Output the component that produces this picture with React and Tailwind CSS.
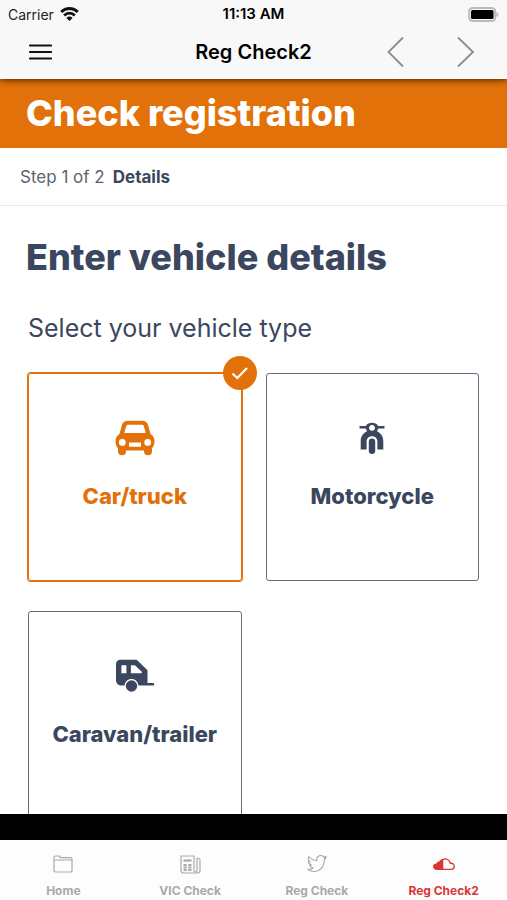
import React, { useState } from 'react';

const WifiIcon = () => (
  <svg width="19" height="14" viewBox="0 0 19 14" fill="none" stroke="#111" strokeWidth="2.8" aria-hidden="true">
    <path d="M1.2 4.9a11.8 11.8 0 0 1 16.6 0" />
    <path d="M4.2 8.4a7.5 7.5 0 0 1 10.6 0" />
    <path d="M9.500 14 6.400 10.900a4.400 4.400 0 0 1 6.200 0z" fill="#111" stroke="none" />
  </svg>
);

const BatteryIcon = () => (
  <svg width="31" height="15" viewBox="0 0 31 15" aria-hidden="true">
    <rect x="1.200" y="1" width="26" height="13" rx="3.5" fill="#f7f7f7" stroke="#bbb" strokeWidth="2" />
    <rect x="3" y="3" width="22.500" height="9" rx="1.5" fill="#000" />
    <path d="M28.400 5v5c1.300-.4 2-1.300 2-2.500s-.7-2.100-2-2.500z" fill="#bbb" />
  </svg>
);

const CarIcon = () => (
  <svg width="40" height="36" viewBox="0 0 40 36" aria-hidden="true">
    <path
      fill="currentColor"
      fillRule="evenodd"
      d="M13 .8h14c3.300 0 5.300 1.500 6.200 4.700l2.300 8.500c2.600 1.500 4 4.200 4 7.300 0 3-1 5.500-2.500 7v2.900a4 4 0 0 1-8 0v-.7H11v.7a4 4 0 0 1-8 0v-2.900C1.500 26.800.5 24.300.5 21.300c0-3.100 1.400-5.800 4-7.300l2.300-8.500C7.700 2.300 9.700.8 13 .8zm.2 4c-1.200 0-1.800.5-2.100 1.600L9.200 13h21.600l-1.900-6.600c-.3-1.100-.9-1.600-2.100-1.600zM7.300 19a3.400 3.400 0 1 0 0 6.800 3.400 3.400 0 0 0 0-6.800zm25.400 0a3.400 3.400 0 1 0 0 6.800 3.400 3.400 0 0 0 0-6.800zM14 22.600v4.200h12v-4.200z"
    />
  </svg>
);

const MotorcycleIcon = () => (
  <svg width="26" height="33" viewBox="0 0 26 33" aria-hidden="true">
    <g fill="currentColor">
      <path
        fillRule="evenodd"
        d="M.5 3.900h6.300C8.200 1.900 10.400.8 13 .8s4.800 1.100 6.200 3.100h6.300v2.700h-6.300l-1.200 2.600c3.800 1.700 6.300 5.400 6.300 9.700v8.600h-5.900v-7.700c0-3.300-2.200-5.500-5.400-5.500s-5.400 2.200-5.400 5.500v7.700H1.700v-8.600c0-4.300 2.500-8 6.300-9.700L6.800 6.600H.5zM13 2.900a2.900 2.900 0 1 0 0 5.800 2.900 2.900 0 0 0 0-5.800z"
      />
      <rect x="9.800" y="16.500" width="6.400" height="15.500" rx="3.200" />
    </g>
  </svg>
);

const TrailerIcon = () => (
  <svg width="40" height="34" viewBox="0 0 40 34" aria-hidden="true">
    <g fill="currentColor">
      <path
        fillRule="evenodd"
        d="M5.500.8h16.200L32.500 11.300V24H38a1.300 1.300 0 0 1 0 2.600H23.500c-.6-4.100-3.400-6.600-7-6.600s-6.400 2.500-7 6.600H7C3.200 26.600 1 24.500 1 21V5.300C1 2.500 2.700.8 5.500.8zm.9 5.400v8h5v-8zm9.500 0v8h10.900v-1.500l-6.900-6.500z"
      />
      <circle cx="16.500" cy="27" r="5.700" />
    </g>
  </svg>
);

const FolderIcon = () => (
  <svg width="20" height="18" viewBox="0 0 20 18" fill="none" stroke="currentColor" strokeWidth="1.2" strokeLinejoin="round" aria-hidden="true">
    <path d="M1 5V2.200C1 1.500 1.500 1 2.200 1h4l1.500 1.700h10c.8 0 1.300.5 1.300 1.200V15.800c0 .7-.5 1.200-1.200 1.200H2.200C1.500 17 1 16.500 1 15.800zM1 5h18" />
  </svg>
);

const NewsIcon = () => (
  <svg width="21" height="19" viewBox="0 0 21 19" fill="none" stroke="currentColor" strokeWidth="1.200" strokeLinejoin="round" aria-hidden="true">
    <path d="M14 15.500V1H1v14.500C1 17 2 18 3.500 18h13.800c1.600 0 2.700-1 2.700-2.500V5c0-.8-.5-1.300-1.300-1.500L17 3v12.500c0 1-.6 1.500-1.500 1.500S14 16.500 14 15.500z" />
    <path d="M3.500 5.500h8" strokeWidth="2.200" />
    <path d="M3.500 10h3.200M8.300 10h3.200M3.500 12.500h3.200M8.300 12.500h3.200M3.500 15h3.200M8.300 15h3.200" strokeWidth="1.900" />
  </svg>
);

const BirdIcon = () => (
  <svg width="20" height="18" viewBox="0 0 20 18" fill="none" stroke="currentColor" strokeWidth="1.100" strokeLinejoin="round" aria-hidden="true">
    <path d="M19.200 2.600c-.6.300-1.200.4-1.700.5.700-.5 1.100-1 1.300-1.800-.7.400-1.500.7-2.200.8A3.800 3.800 0 0 0 10 5.700C6.700 5.500 4 4.100 1.900 1.500.800 3.500 1.400 5.500 3.100 6.700c-.6 0-1.200-.2-1.700-.5 0 1.900 1.200 3.400 3 3.800-.5.200-1.100.2-1.700.1.500 1.600 1.900 2.600 3.600 2.700-1.600 1.300-3.500 1.900-5.500 1.700 6.800 4.600 16.600.9 16.500-10 .8-.5 1.400-1.200 1.900-1.900z" />
  </svg>
);

const CloudIcon = () => (
  <svg width="22" height="12" viewBox="0 0 22 12" fill="none" stroke="currentColor" strokeWidth="1.300" strokeLinejoin="round" aria-hidden="true">
    <path d="M9.500 1.600v9.700H4C2 11.300.700 10.200.700 8.700S2 6.200 3.600 6.200C4.200 4.500 5.300 3.700 6.700 3.800 7.400 2.700 8.300 2 9.500 1.600z" fill="currentColor" />
    <path d="M9.500 1.600c3.500-1.800 7.300.2 7.700 3.700 2.400-.4 4.100 1 4.100 3 0 1.800-1.300 3-3.100 3H9.500z" />
  </svg>
);

const vehicleTypes = [
  { id: 'car', label: 'Car/truck', icon: CarIcon },
  { id: 'motorcycle', label: 'Motorcycle', icon: MotorcycleIcon },
  { id: 'trailer', label: 'Caravan/trailer', icon: TrailerIcon }
];

const tabs = [
  { label: 'Home', icon: FolderIcon },
  { label: 'VIC Check', icon: NewsIcon },
  { label: 'Reg Check', icon: BirdIcon },
  { label: 'Reg Check2', icon: CloudIcon }
];

const VehicleCard = ({ type, selected, onSelect }) => (
  <label
    htmlFor={type.id}
    className={`relative flex h-52 cursor-pointer flex-col items-center rounded-[3px] border pt-11 ${selected ? 'border-[#e27109] text-[#e27109] ring-1 ring-[#e27109]' : 'border-[#67697e] text-[#3a475e]'}`}
  >
    <input id={type.id} type="radio" name="vehicle" className="sr-only" checked={selected} onChange={() => onSelect(type.id)} />
    <span className="flex h-10 items-center">
      <type.icon />
    </span>
    <span className="mt-6 text-[22px] leading-7 font-extrabold">{type.label}</span>
    {selected && (
      <span className="absolute -top-[18px] -right-4 flex size-[34px] items-center justify-center rounded-full bg-[#e27109]">
        <svg width="18" height="14" viewBox="0 0 18 14" fill="none" stroke="#fff" strokeWidth="2.200" aria-hidden="true">
          <path d="M1.500 7.500 6.300 12 16 2" />
        </svg>
      </span>
    )}
  </label>
);

const App = () => {
  const [vehicle, setVehicle] = useState('car');
  const [activeTab, setActiveTab] = useState('Reg Check2');

  return (
    <div className="flex h-screen flex-col overflow-hidden bg-white font-['Inter',sans-serif]">
      <header className="relative z-10 shrink-0 bg-[#f8f8f8] shadow-[0_1px_7px_rgba(0,0,0,0.7)]">
        <div className="grid h-7 grid-cols-3 items-center px-2 text-[14px] text-[#222]">
          <div className="flex items-center gap-1.5">
            Carrier <WifiIcon />
          </div>
          <div className="text-center text-[15px] font-semibold text-black">11:13 AM</div>
          <div className="flex justify-end">
            <BatteryIcon />
          </div>
        </div>
        <div className="grid h-[51px] grid-cols-[1fr_auto_1fr] items-center px-7 pb-1">
          <button type="button" aria-label="Menu" className="justify-self-start">
            <svg width="24" height="18" viewBox="0 0 24 18" stroke="#111" strokeWidth="2.200" strokeLinecap="round" aria-hidden="true">
              <path d="M2 2.500h21M2 9h21M2 15.500h21" />
            </svg>
          </button>
          <h1 className="text-[20px] font-semibold text-black">Reg Check2</h1>
          <div className="flex justify-end gap-[52px] pr-1">
            <button type="button" aria-label="Back">
              <svg width="18" height="32" viewBox="0 0 18 32" fill="none" stroke="#8c8c8c" strokeWidth="1.800" aria-hidden="true">
                <path d="M16 1.500 1.500 16 16 30.500" />
              </svg>
            </button>
            <button type="button" aria-label="Forward">
              <svg width="18" height="32" viewBox="0 0 18 32" fill="none" stroke="#8c8c8c" strokeWidth="1.800" aria-hidden="true">
                <path d="m1 1.500 15 14.500L1 30.500" />
              </svg>
            </button>
          </div>
        </div>
      </header>

      <main className="min-h-0 flex-1 overflow-hidden text-[#3a475e]">
        <div className="flex h-[69px] items-center bg-[#e27109] px-[26px] pb-0.5">
          <h2 className="text-[36px] leading-10 font-extrabold text-white">Check registration</h2>
        </div>
        <div className="flex h-[58px] items-center gap-2 border-b border-[#e9e9ed] px-5 pt-0.5 text-[17px]">
          <span className="text-[#5a6375]">Step 1 of 2</span>
          <span className="font-bold">Details</span>
        </div>
        <h3 className="mt-7 px-[26px] text-[36px] leading-[46px] font-extrabold">Enter vehicle details</h3>
        <fieldset className="px-7">
          <legend className="pt-7 text-[25px] leading-10">Select your vehicle type</legend>
          <div className="mt-[25px] grid grid-cols-2 gap-x-6 gap-y-[30px]">
            {vehicleTypes.map((type) => (
              <VehicleCard key={type.id} type={type} selected={vehicle === type.id} onSelect={setVehicle} />
            ))}
          </div>
        </fieldset>
      </main>

      <div className="h-[26px] shrink-0 bg-black"></div>

      <nav className="grid h-15 shrink-0 grid-cols-4 bg-[#fdfdfd]">
        {tabs.map((tab) => (
          <button
            key={tab.label}
            type="button"
            onClick={() => setActiveTab(tab.label)}
            className={`flex flex-col items-center pt-3 text-[12px] leading-4 font-bold ${activeTab === tab.label ? 'text-[#dc3535]' : 'text-[#a9a9a9]'}`}
          >
            <span className="flex h-6 items-center">
              <tab.icon />
            </span>
            <span className="mt-[7px]">{tab.label}</span>
          </button>
        ))}
      </nav>
    </div>
  );
};

export default App;
